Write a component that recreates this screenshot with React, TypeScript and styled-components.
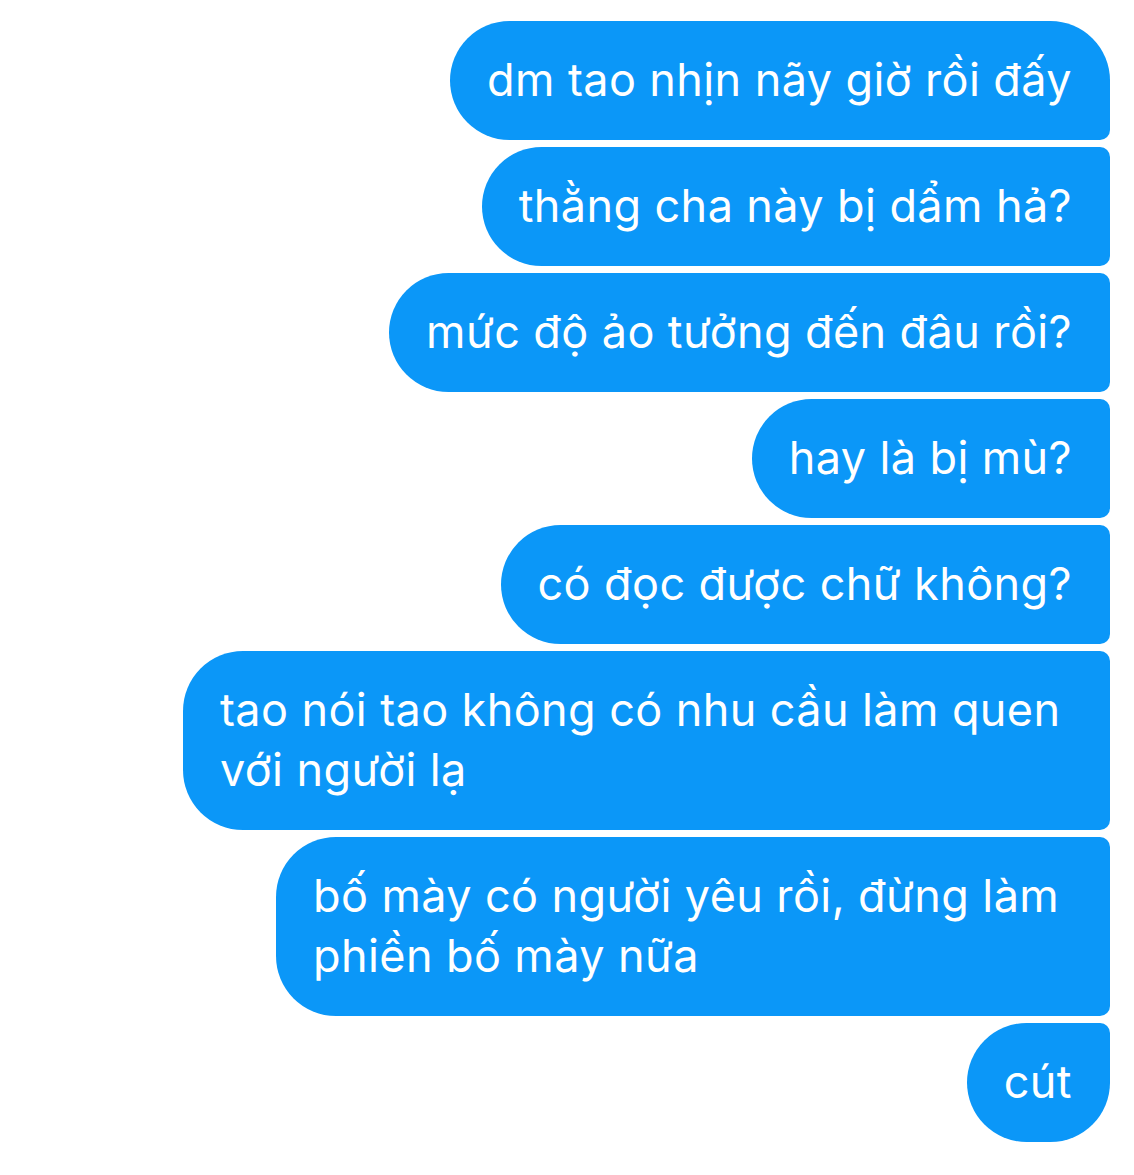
import React from "react";
import styled, { createGlobalStyle } from "styled-components";

const Global = createGlobalStyle`
  html, body { margin: 0; padding: 0; background: #ffffff; }
  body { font-family: Inter, "Noto Sans", sans-serif; }
`;

const Thread = styled.div`
  display: flex;
  flex-direction: column;
  align-items: flex-end;
  gap: 7px;
  padding: 21px 24px 0 24px;
  width: 1134px;
  height: 1175px;
  box-sizing: border-box;
`;

type Pos = "first" | "middle" | "last";

const Bubble = styled.div<{ $pos: Pos; $maxw?: number }>`
  background: #0b97f8;
  color: #ffffff;
  font-family: Inter, "Noto Sans", sans-serif;
  font-size: 45px;
  line-height: 60px;
  letter-spacing: 0.4px;
  padding: 29px 38px 30px 37px;
  box-sizing: border-box;
  max-width: ${(p) => (p.$maxw ? `${p.$maxw}px` : "none")};
  border-radius: ${(p) =>
    p.$pos === "first"
      ? "60px 60px 10px 60px"
      : p.$pos === "last"
      ? "60px 10px 60px 60px"
      : "60px 10px 10px 60px"};
`;

const messages: { text: string; pos: Pos; maxw?: number }[] = [
  { text: "dm tao nhịn nãy giờ rồi đấy", pos: "first" },
  { text: "thằng cha này bị dẩm hả?", pos: "middle" },
  { text: "mức độ ảo tưởng đến đâu rồi?", pos: "middle" },
  { text: "hay là bị mù?", pos: "middle" },
  { text: "có đọc được chữ không?", pos: "middle" },
  { text: "tao nói tao không có nhu cầu làm quen với người lạ", pos: "middle", maxw: 927 },
  { text: "bố mày có người yêu rồi, đừng làm phiền bố mày nữa", pos: "middle", maxw: 834 },
  { text: "cút", pos: "last" },
];

export default function App() {
  return (
    <>
      <Global />
      <Thread>
        {messages.map((m, i) => (
          <Bubble key={i} $pos={m.pos} $maxw={m.maxw}>
            {m.text}
          </Bubble>
        ))}
      </Thread>
    </>
  );
}
